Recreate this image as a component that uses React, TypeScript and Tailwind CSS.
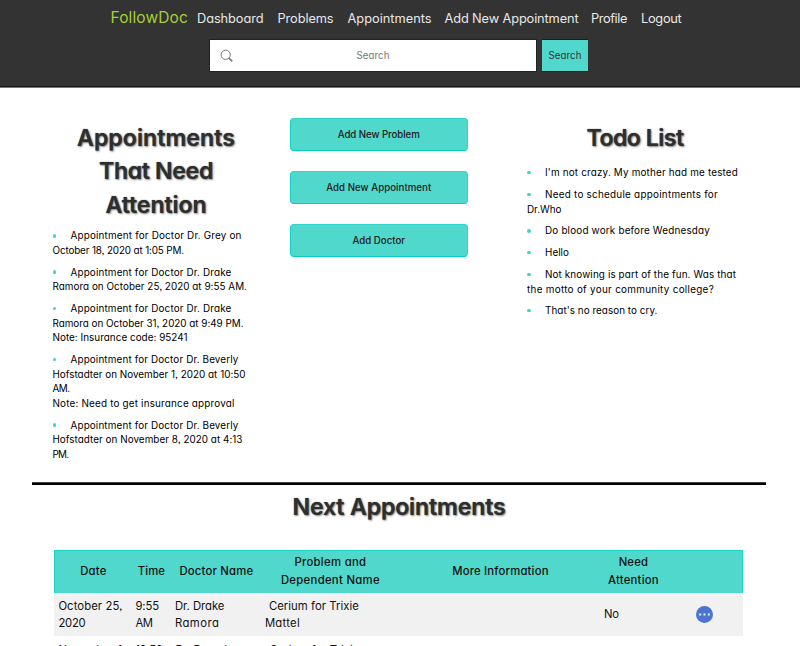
import { useLayoutEffect, useRef } from "react";

type FitProps = { t: string; w: number; c?: string };

/** One line of text, tracked so that it spans the given measure. */
function Fit({ t, w, c = "" }: FitProps) {
  const ref = useRef<HTMLSpanElement>(null);
  useLayoutEffect(() => {
    const el = ref.current;
    if (!el) return;
    el.style.letterSpacing = "0px";
    const natural = el.getBoundingClientRect().width;
    const gap = (w - natural) / t.length;
    el.style.letterSpacing = gap + "px";
  }, [t, w]);
  return (
    <span ref={ref} className={"inline-block whitespace-pre " + c}>
      {t}
    </span>
  );
}

type Line = [string, number];

const attention: Line[][] = [
  [["Appointment for Doctor Dr. Grey on", 171], ["October 18, 2020 at 1:05 PM.", 131.5]],
  [["Appointment for Doctor Dr. Drake", 161], ["Ramora on October 25, 2020 at 9:55 AM.", 194.5]],
  [["Appointment for Doctor Dr. Drake", 161], ["Ramora on October 31, 2020 at 9:49 PM.", 191], ["Note: Insurance code: 95241", 135]],
  [["Appointment for Doctor Dr. Beverly", 168], ["Hofstadter on November 1, 2020 at 10:50", 193], ["AM.", 17], ["Note: Need to get insurance approval", 182]],
  [["Appointment for Doctor Dr. Beverly", 168], ["Hofstadter on November 8, 2020 at 4:13", 190], ["PM.", 16]],
];

const todos: Line[][] = [
  [["I'm not crazy. My mother had me tested", 193]],
  [["Need to schedule appointments for", 173], ["Dr.Who", 34.5]],
  [["Do blood work before Wednesday", 165]],
  [["Hello", 24]],
  [["Not knowing is part of the fun. Was that", 191], ["the motto of your community college?", 187]],
  [["That's no reason to cry.", 112.5]],
];

function BulletList({ items }: { items: Line[][] }) {
  return (
    <ul className="flex flex-col gap-[7.2px] text-[9.9px] leading-[14.6px] text-black">
      {items.map((lines, i) => (
        <li key={i}>
          {lines.map(([t, w], j) => (
            <div key={j} className="flex h-[14.6px] items-center">
              {j === 0 && <span className="mr-[14.5px] size-[3.5px] shrink-0 rounded-full bg-[#40d3c8]" />}
              <Fit t={t} w={w} />
            </div>
          ))}
        </li>
      ))}
    </ul>
  );
}

const headingStyle =
  "flex flex-col items-center text-[23.2px] leading-[33.5px] font-semibold text-[#2e2e2e] [text-shadow:0_0_1px_#555,1px_1px_2px_#888]";

function Header() {
  return (
    <header className="h-[88px] border-b border-[#777] bg-[#333] shadow-[inset_0_-1px_0_#191919]">
      <nav className="flex h-[36px] items-center pt-[2px] pl-[110.5px] text-[12.8px] text-[#e8e8e8]">
        <Fit t="FollowDoc" w={77.5} c="-mt-[3px] mr-[9px] text-[15.5px] text-[#a9cf38]" />
        <Fit t="Dashboard" w={66.5} c="mr-[14px]" />
        <Fit t="Problems" w={56} c="mr-[14px]" />
        <Fit t="Appointments" w={84} c="mr-[13px]" />
        <Fit t="Add New Appointment" w={134} c="mr-[12.5px]" />
        <Fit t="Profile" w={36} c="mr-[14px]" />
        <Fit t="Logout" w={40.5} />
      </nav>
      <div className="flex pt-[4px] pl-[210px]">
        <div className="flex h-[31px] w-[326px] items-center bg-white text-[9.7px] text-[#777] shadow-[0_0_0_1px_#222]">
          <svg className="ml-[10px] size-[13px]" viewBox="0 0 13 13" fill="none" stroke="#777">
            <circle cx="5.7" cy="5.8" r="4.6" strokeWidth="1" />
            <path d="M9 9.1 12.3 12.4" strokeWidth="1.5" />
          </svg>
          <Fit t="Search" w={33} c="ml-[123.5px] pt-px" />
        </div>
        <button className="ml-[6px] flex h-[31px] w-[46px] items-center justify-center bg-[#50d8cd] pt-px text-[9.7px] text-[#333] shadow-[0_-1px_0_#3a1012,0_1px_0_#3a1012]">
          <Fit t="Search" w={33} />
        </button>
      </div>
    </header>
  );
}

function Action({ t, w }: { t: string; w: number }) {
  return (
    <button className="flex h-[33px] w-full items-center justify-center rounded-[4px] border border-[#30d4c9] border-b-[#00cfc2] border-l-[#10d2c6] bg-[#50d8cd] pt-px text-[9.7px] font-medium text-[#202020]">
      <Fit t={t} w={w} />
    </button>
  );
}

const columns = "grid grid-cols-[76px_40px_90px_138px_202px_64px_79px]";

function Table() {
  return (
    <div className="ml-[54.4px] w-[689px] text-[11.3px] leading-[17.5px] text-[#111]">
      <div className={columns + " h-[43.5px] items-center justify-items-center border border-b-0 border-[#20d3c7] bg-[#50d8cd] font-medium"}>
        <Fit t="Date" w={26.5} />
        <Fit t="Time" w={27.5} />
        <Fit t="Doctor Name" w={74} />
        <div className="flex flex-col items-center">
          <Fit t="Problem and" w={72} />
          <Fit t="Dependent Name" w={99} />
        </div>
        <Fit t="More Information" w={96.5} />
        <div className="flex flex-col items-center">
          <Fit t="Need" w={29.5} />
          <Fit t="Attention" w={51} />
        </div>
      </div>
      <div className={columns + " h-[43px] items-center bg-[#f1f1f1] pt-px"}>
        <div className="flex flex-col items-start pl-[4px]">
          <Fit t="October 25," w={64} />
          <Fit t="2020" w={27} />
        </div>
        <div className="flex flex-col items-start pl-[5px]">
          <Fit t="9:55" w={23.5} />
          <Fit t="AM" w={17} />
        </div>
        <div className="flex flex-col items-start pl-[4.5px]">
          <Fit t="Dr. Drake" w={49.5} />
          <Fit t="Ramora" w={44.5} />
        </div>
        <div className="flex flex-col items-start pl-[4.5px]">
          <Fit t="Cerium for Trixie" w={90} c="ml-1" />
          <Fit t="Mattel" w={35} />
        </div>
        <div />
        <div className="pl-[3.5px]">
          <Fit t="No" w={15} />
        </div>
        <div className="-mt-px flex pl-[31.6px]">
          <svg className="size-[17px]" viewBox="0 0 17 17">
            <circle cx="8.5" cy="8.5" r="8.5" fill="#4b75d1" />
            <g fill="#fff" opacity="0.9">
              <rect x="3.2" y="7.5" width="2" height="2" />
              <rect x="7.5" y="7.5" width="2" height="2" />
              <rect x="11.8" y="7.5" width="2" height="2" />
            </g>
          </svg>
        </div>
      </div>
      <div className={columns + " pt-[6px]"}>
        <div className="flex pl-1">
          <Fit t="November 1," w={67} />
        </div>
        <div className="flex pl-[5px]">
          <Fit t="10:50" w={27} />
        </div>
        <div className="flex pl-[5px]">
          <Fit t="Dr. Beverly" w={58} />
        </div>
        <div className="flex pl-[9px]">
          <Fit t="Cerium for Trixie" w={90} />
        </div>
      </div>
    </div>
  );
}

export default function App() {
  return (
    <div className="h-[646px] w-[800px] overflow-hidden bg-white font-[Inter,sans-serif] [font-feature-settings:'cv11'_1,'ss03'_1]">
      <Header />
      <main>
        <div className="flex h-[394px] items-start">
          <section className="ml-[52.5px] w-[207px] pt-[33.6px]">
            <h1 className={headingStyle + " mb-[6.4px]"}>
              <Fit t="Appointments" w={158} />
              <Fit t="That Need" w={114} />
              <Fit t="Attention" w={101} />
            </h1>
            <BulletList items={attention} />
          </section>
          <section className="ml-[30px] flex w-[178.5px] flex-col gap-[20px] pt-[30px]">
            <Action t="Add New Problem" w={82} />
            <Action t="Add New Appointment" w={105} />
            <Action t="Add Doctor" w={52.5} />
          </section>
          <section className="ml-[59px] w-[216px] pt-[34px]">
            <h1 className={headingStyle + " mb-[9.8px]"}>
              <Fit t="Todo List" w={97} />
            </h1>
            <BulletList items={todos} />
          </section>
        </div>
        <hr className="ml-[32px] h-[3px] w-[734px] border-0 border-t border-[#444] bg-black" />
        <h1 className={headingStyle + " mt-[6px] mb-[25px] mr-[2px]"}>
          <Fit t="Next Appointments" w={213} />
        </h1>
        <Table />
      </main>
    </div>
  );
}
